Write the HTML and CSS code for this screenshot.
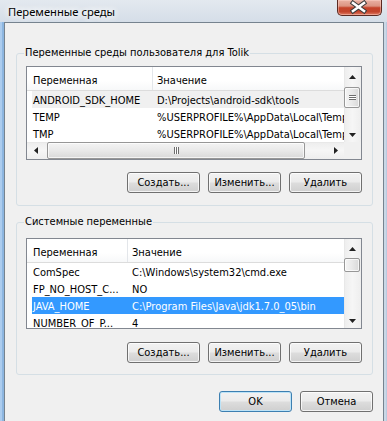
FILE: index.html
```html
<!DOCTYPE html>
<html lang="ru">
<head>
<meta charset="utf-8">
<title>Переменные среды</title>
<link rel="stylesheet" href="styles.css">
</head>
<body>
<div class="window">
  <div class="titlebar">
    <span class="title">Переменные среды</span>
    <div class="close">
      <svg width="45" height="16" viewBox="0 0 45 16">
        <path d="M17 3 L28 11 M28 3 L17 11" stroke="#3a3a3a" stroke-width="4.6" stroke-linecap="square" fill="none"/>
        <path d="M17 3 L28 11 M28 3 L17 11" stroke="#ffffff" stroke-width="2.6" stroke-linecap="square" fill="none"/>
      </svg>
    </div>
  </div>
  <div class="client">
    <fieldset class="group group-user">
      <legend>Переменные среды пользователя для Tolik</legend>
      <div class="list list-user">
        <div class="list-content">
          <div class="header">
            <div class="hcol hcol-name">Переменная</div>
            <div class="hcol hcol-value">Значение</div>
          </div>
          <div class="row row-focus"><span class="cell cell-name">ANDROID_SDK_HOME</span><span class="cell cell-value">D:\Projects\android-sdk\tools</span></div>
          <div class="row"><span class="cell cell-name">TEMP</span><span class="cell cell-value">%USERPROFILE%\AppData\Local\Temp</span></div>
          <div class="row"><span class="cell cell-name">TMP</span><span class="cell cell-value">%USERPROFILE%\AppData\Local\Temp</span></div>
        </div>
        <div class="vscroll">
          <div class="arrow"><svg width="7" height="4" viewBox="0 0 7 4"><path d="M0 4 L3.5 0 L7 4 Z" fill="#222"/></svg></div>
          <div class="vtrack"><div class="vthumb vthumb-user"><span class="grip"></span></div></div>
          <div class="arrow"><svg width="7" height="4" viewBox="0 0 7 4"><path d="M0 0 L3.5 4 L7 0 Z" fill="#222"/></svg></div>
        </div>
        <div class="hscroll">
          <div class="harrow"><svg width="4" height="7" viewBox="0 0 4 7"><path d="M4 0 L0 3.5 L4 7 Z" fill="#222"/></svg></div>
          <div class="htrack"><div class="hthumb"><span class="hgrip"></span></div></div>
          <div class="harrow"><svg width="4" height="7" viewBox="0 0 4 7"><path d="M0 0 L4 3.5 L0 7 Z" fill="#222"/></svg></div>
        </div>
        <div class="corner"></div>
      </div>
      <div class="buttons">
        <button class="btn">Создать...</button>
        <button class="btn">Изменить...</button>
        <button class="btn">Удалить</button>
      </div>
    </fieldset>

    <fieldset class="group group-system">
      <legend>Системные переменные</legend>
      <div class="list list-system">
        <div class="list-content">
          <div class="header">
            <div class="hcol hcol-name">Переменная</div>
            <div class="hcol hcol-value">Значение</div>
          </div>
          <div class="row"><span class="cell cell-name">ComSpec</span><span class="cell cell-value">C:\Windows\system32\cmd.exe</span></div>
          <div class="row"><span class="cell cell-name">FP_NO_HOST_C...</span><span class="cell cell-value">NO</span></div>
          <div class="row row-selected"><span class="cell cell-name">JAVA_HOME</span><span class="cell cell-value">C:\Program Files\Java\jdk1.7.0_05\bin</span></div>
          <div class="row"><span class="cell cell-name">NUMBER_OF_P...</span><span class="cell cell-value">4</span></div>
        </div>
        <div class="vscroll">
          <div class="arrow"><svg width="7" height="4" viewBox="0 0 7 4"><path d="M0 4 L3.5 0 L7 4 Z" fill="#222"/></svg></div>
          <div class="vtrack"><div class="vthumb vthumb-system"></div></div>
          <div class="arrow"><svg width="7" height="4" viewBox="0 0 7 4"><path d="M0 0 L3.5 4 L7 0 Z" fill="#222"/></svg></div>
        </div>
      </div>
      <div class="buttons">
        <button class="btn">Создать...</button>
        <button class="btn">Изменить...</button>
        <button class="btn">Удалить</button>
      </div>
    </fieldset>

    <div class="footer">
      <button class="btn btn-default">OK</button>
      <button class="btn">Отмена</button>
    </div>
  </div>
</div>
</body>
</html>
```
FILE: styles.css
```css
* { box-sizing: border-box; }
html, body { margin: 0; padding: 0; }
body {
  width: 387px;
  height: 421px;
  overflow: hidden;
  font-family: "DejaVu Sans Condensed", "DejaVu Sans", sans-serif;
  font-size: 11px;
  color: #000;
}
.window {
  width: 387px;
  height: 421px;
  display: flex;
  flex-direction: column;
  padding: 0 3px 0 4px;
  background: linear-gradient(#e3e9ef, #d5dee8 22px, #c9d8e8 100%);
}
.titlebar {
  height: 22px;
  flex: none;
  display: flex;
  justify-content: space-between;
  align-items: flex-start;
}
.title {
  font-family: "Noto Sans", "Open Sans", sans-serif;
  font-size: 11.2px;
  line-height: 16px;
  margin: 4px 0 0 4px;
  color: #000;
  text-shadow: 0 0 6px #fff, 0 0 8px #fff, 0 0 10px #fff;
}
.close {
  width: 45px;
  height: 16px;
  margin-right: 2px;
  border: 1px solid #5b2a22;
  border-top: none;
  border-radius: 0 0 5px 5px;
  background: linear-gradient(#eab1a3 0%, #dc9482 40%, #c5432a 52%, #c3452d 78%, #e07d66 100%);
  box-shadow: inset 0 0 0 1px rgba(255, 215, 205, 0.45);
  display: flex;
  align-items: flex-start;
  justify-content: center;
}
.close svg { display: block; margin-left: -2px; }

.client {
  flex: 1;
  background: #f0f0f0;
  border: 1px solid #76838f;
  border-bottom: none;
  box-shadow: -2px 0 0 #8db6e0, -4px 0 0 #acccee, 2px 0 0 #cad8e6, 3px 0 0 #b9cbe0;
  padding: 0 10px 0 11px;
  display: flex;
  flex-direction: column;
}

.group {
  margin: 0;
  min-width: 0;
  border: 1px solid #d5dfe5;
  border-radius: 3px;
  padding: 0 10px 12px 9px;
}
.group legend {
  padding: 0 1px;
  margin-left: -2px;
  line-height: 14px;
}
.group-user { margin-top: 23px; padding-top: 6px; }
.group-system { margin-top: 9px; padding-top: 9px; padding-bottom: 11px; }

.list {
  border: 1px solid #828790;
  background: #fff;
  display: grid;
  grid-template-columns: 1fr 17px;
  overflow: hidden;
}
.list-user { height: 94px; grid-template-rows: 75px 17px; }
.list-system { height: 91px; grid-template-rows: 89px; }

.list-content {
  overflow: hidden;
  min-width: 0;
}
.header {
  height: 24px;
  display: flex;
  border-bottom: 1px solid #dcdcdc;
  background: linear-gradient(#ffffff 60%, #f7f8f9);
}
.hcol {
  display: flex;
  align-items: center;
  padding-top: 4px;
  white-space: nowrap;
}
.hcol-name {
  padding-left: 6px;
  border-right: 1px solid #e3e6ea;
}
.list-user .hcol-name { width: 126px; }
.list-system .hcol-name { width: 101px; }
.hcol-value { padding-left: 4px; }

.row {
  height: 17px;
  line-height: 14px;
  padding-top: 3px;
  margin-left: 5px;
  display: flex;
  white-space: nowrap;
  overflow: hidden;
}
.cell { display: block; overflow: hidden; }
.cell-name { padding-left: 1px; flex: none; }
.list-user .cell-name { width: 125px; }
.list-system .cell-name { width: 100px; }
.cell-value { flex: 1; min-width: 0; }
.row-focus { background: #f0f0f0; }
.row-selected { background: #3399ff; color: #fff; }

.vscroll {
  display: flex;
  flex-direction: column;
  background: linear-gradient(90deg, #e2e2e2 0, #eeeeee 1px, #f6f6f6 50%, #eeeeee 100%);
}
.arrow {
  height: 17px;
  flex: none;
  display: flex;
  align-items: center;
  justify-content: center;
  padding-top: 2px;
}
.arrow svg, .harrow svg { display: block; }
.vtrack { flex: 1; min-height: 0; }
.vthumb {
  width: 16px;
  border: 1px solid #979797;
  border-radius: 2px;
  background: linear-gradient(90deg, #f4f4f4, #e9e9e9 50%, #d9d9d9);
  box-shadow: inset 0 0 0 1px rgba(255,255,255,0.7);
  display: flex;
  align-items: center;
  justify-content: center;
}
.vthumb-user { margin-top: 3px; height: 21px; }
.vthumb-system { margin-top: 2px; height: 14px; }
.grip {
  width: 7px;
  height: 5px;
  border-top: 1px solid #6e6e6e;
  border-bottom: 1px solid #6e6e6e;
  background: linear-gradient(#fff 0 1px, #6e6e6e 1px 2px, #fff 2px 3px, transparent 3px);
}

.hscroll {
  display: flex;
  background: linear-gradient(#e2e2e2 0, #eeeeee 1px, #f6f6f6 50%, #eeeeee 100%);
}
.harrow {
  width: 17px;
  flex: none;
  display: flex;
  align-items: center;
  justify-content: center;
}
.htrack { flex: 1; min-width: 0; display: flex; align-items: stretch; }
.hthumb {
  margin-left: 3px;
  width: 258px;
  border: 1px solid #979797;
  border-radius: 2px;
  background: linear-gradient(#f4f4f4, #e9e9e9 50%, #d9d9d9);
  box-shadow: inset 0 0 0 1px rgba(255,255,255,0.7);
  display: flex;
  align-items: center;
  justify-content: center;
}
.hgrip {
  width: 5px;
  height: 7px;
  border-left: 1px solid #6e6e6e;
  border-right: 1px solid #6e6e6e;
  background: linear-gradient(90deg, #fff 0 1px, #6e6e6e 1px 2px, #fff 2px 3px, transparent 3px);
}
.corner { background: #f0f0f0; }

.buttons {
  display: flex;
  justify-content: flex-end;
  gap: 8px;
  margin-top: 12px;
}
.group-system .buttons { margin-top: 13px; }

.btn {
  width: 73px;
  height: 21px;
  padding: 0;
  margin: 0;
  font: inherit;
  font-size: 11px;
  color: #000;
  border: 1px solid #707070;
  border-radius: 3px;
  background: linear-gradient(#f2f2f2 0%, #ebebeb 48%, #dddddd 52%, #cfcfcf 100%);
  box-shadow: inset 0 0 0 1px rgba(255,255,255,0.75);
  display: flex;
  align-items: center;
  justify-content: center;
  line-height: 14px;
}
.btn-default {
  border-color: #3c7fb1;
  box-shadow: inset 0 0 0 1px #bde3f7;
}
.footer {
  display: flex;
  justify-content: flex-end;
  gap: 8px;
  margin-top: 16px;
}
```
